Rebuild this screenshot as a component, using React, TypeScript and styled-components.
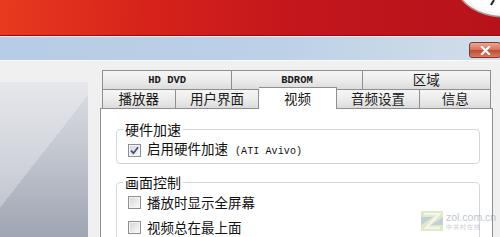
import styled, { createGlobalStyle } from 'styled-components';

const GlobalStyle = createGlobalStyle`
  html, body {
    margin: 0;
    padding: 0;
    background: #f0f0f0;
    overflow: hidden;
  }
  body {
    font-family: "Noto Sans CJK SC", "Noto Sans", sans-serif;
    color: #111;
  }
  #root {
    width: 500px;
    height: 237px;
    overflow: hidden;
  }
`;

const Page = styled.div`
  position: relative;
  width: 500px;
  height: 237px;
  display: flex;
  flex-direction: column;
  overflow: hidden;
`;

const Header = styled.div`
  height: 35px;
  flex: none;
  border-bottom: 1px solid #8a0f13;
  background:
    linear-gradient(100deg, rgba(255, 120, 60, 0.18) 0%, rgba(255, 255, 255, 0) 30%),
    linear-gradient(90deg, #e22d19 0%, #d6221a 30%, #c2161c 60%, #b7121b 100%);
  display: flex;
  justify-content: flex-end;
  align-items: flex-start;
`;

const WhiteLine = styled.div`
  height: 1px;
  flex: none;
  background: #f6eaea;
`;

const TitleBar = styled.div`
  height: 23px;
  flex: none;
  border-bottom: 1px solid #fbfbfb;
  background: linear-gradient(90deg, #b7cde5 0%, #bcd0e6 55%, #d2deea 100%);
  display: flex;
  justify-content: flex-end;
  align-items: flex-start;
`;

const CloseButton = styled.div`
  width: 30px;
  height: 14px;
  margin-top: 5px;
  margin-right: -1px;
  border: 1px solid #8d3426;
  border-radius: 3px;
  background: linear-gradient(#eaa693 0%, #d8735c 48%, #c24a33 52%, #d77a5f 100%);
  display: flex;
  align-items: center;
  justify-content: center;
`;

const Body = styled.div`
  flex: 1;
  min-height: 0;
  display: flex;
  padding-top: 9px;
`;

const LeftPanel = styled.div`
  width: 88px;
  flex: none;
  margin-top: 12px;
  background:
    linear-gradient(128deg, rgba(255, 255, 255, 0.28) 47%, rgba(255, 255, 255, 0) 47%),
    linear-gradient(180deg, #dcdee4 0%, #c3c7d0 45%, #9ea4b1 100%);
`;

const Dialog = styled.div`
  margin-left: 12px;
  width: 393px;
  display: flex;
  flex-direction: column;
`;

const TabRow = styled.div`
  display: flex;
  padding: 0 2px;
  height: 19px;
  flex: none;
  position: relative;
  z-index: 1;
`;

const Tab = styled.div<{ $w: number; $active?: boolean; $mono?: boolean }>`
  width: ${(p) => p.$w}px;
  box-sizing: border-box;
  border: 1px solid #8f8f8f;
  border-bottom: ${(p) => (p.$active ? 'none' : '1px solid #8f8f8f')};
  & + & {
    border-left: none;
  }
  background: ${(p) =>
    p.$active ? '#ffffff' : 'linear-gradient(#f6f6f6 0%, #ececec 50%, #dcdcdc 100%)'};
  margin-top: ${(p) => (p.$active ? '-2px' : '0')};
  height: ${(p) => (p.$active ? '22px' : '20px')};
  display: flex;
  align-items: center;
  justify-content: center;
  font-family: ${(p) =>
    p.$mono ? '"Liberation Mono", monospace' : '"Noto Sans CJK SC", sans-serif'};
  font-size: ${(p) => (p.$mono ? '10.5px' : '13.5px')};
  font-weight: ${(p) => (p.$mono ? 700 : 400)};
  line-height: 1;
  color: #1a1a1a;
`;

const Content = styled.div`
  flex: 1;
  background: #ffffff;
  border: 1px solid #8c8f96;
  border-bottom: none;
  padding: 13px 12px 0 15px;
`;

const Group = styled.fieldset<{ $gap?: number }>`
  margin: ${(p) => p.$gap ?? 0}px 0 0 0;
  padding: 0 0 6px 6px;
  border: 1px solid #d0d8df;
  border-radius: 4px;
  min-width: 0;
`;

const Legend = styled.legend`
  padding: 0 2px;
  font-size: 14px;
  line-height: 14px;
  color: #111;
`;

const Row = styled.div<{ $top: number }>`
  display: flex;
  align-items: center;
  gap: 6px;
  margin-top: ${(p) => p.$top}px;
  padding-left: 5px;
  height: 14px;
  font-size: 13.5px;
  line-height: 14px;
  white-space: nowrap;
`;

const Box = styled.span`
  width: 11px;
  height: 11px;
  flex: none;
  border: 1px solid #8e8f91;
  box-shadow: inset 0 0 0 1px #f4f4f4;
  background: linear-gradient(135deg, #d2d3d6 0%, #ececed 60%, #f8f8f8 100%);
  display: flex;
  align-items: center;
  justify-content: center;
`;

const Mono = styled.span`
  font-family: "Liberation Mono", monospace;
  font-size: 10px;
  margin-left: 7px;
  letter-spacing: 0.1px;
`;

const Watermark = styled.div`
  position: absolute;
  left: 421px;
  top: 211px;
  display: flex;
  align-items: center;
  gap: 3px;
  opacity: 0.55;
`;

const WmText = styled.div`
  display: flex;
  flex-direction: column;
  line-height: 1;
`;

const WmMain = styled.span`
  font-family: "Liberation Sans", sans-serif;
  font-size: 10.5px;
  color: #8a9aa8;
`;

const WmSub = styled.span`
  font-size: 6px;
  color: #9aa4ad;
  margin-top: 1px;
  letter-spacing: 1px;
`;

const Checkbox = ({ checked }: { checked?: boolean }) => (
  <Box>
    {checked && (
      <svg width="9" height="9" viewBox="0 0 9 9">
        <path d="M1 4.6 L3.5 7.2 L8 1.2" fill="none" stroke="#3f4f86" strokeWidth="1.8" />
      </svg>
    )}
  </Box>
);

const App = () => {
  return (
    <Page>
      <GlobalStyle />
      <Header>
        <svg width="42" height="18" viewBox="0 0 42 18">
          <ellipse cx="48" cy="-14" rx="49" ry="31" fill="#f4f4f4" stroke="#9a9a9a" strokeWidth="1.5" />
          <ellipse cx="46" cy="-12" rx="42" ry="25" fill="#ffffff" />
          <path d="M33 5 L36 0" stroke="#222" strokeWidth="2" />
        </svg>
      </Header>
      <WhiteLine />
      <TitleBar>
        <CloseButton>
          <svg width="11" height="9" viewBox="0 0 11 9">
            <path d="M2 1 L9 8 M9 1 L2 8" stroke="#ffffff" strokeWidth="2.2" strokeLinecap="square" />
          </svg>
        </CloseButton>
      </TitleBar>
      <Body>
        <LeftPanel />
        <Dialog>
          <TabRow>
            <Tab $w={131} $mono>HD DVD</Tab>
            <Tab $w={131} $mono>BDROM</Tab>
            <Tab $w={129}>区域</Tab>
          </TabRow>
          <TabRow>
            <Tab $w={74}>播放器</Tab>
            <Tab $w={84}>用户界面</Tab>
            <Tab $w={78} $active>视频</Tab>
            <Tab $w={84}>音频设置</Tab>
            <Tab $w={71}>信息</Tab>
          </TabRow>
          <Content>
            <Group>
              <Legend>硬件加速</Legend>
              <Row $top={7}>
                <Checkbox checked />
                <span>
                  启用硬件加速<Mono>(ATI Avivo)</Mono>
                </span>
              </Row>
            </Group>
            <Group $gap={11}>
              <Legend>画面控制</Legend>
              <Row $top={6}>
                <Checkbox />
                <span>播放时显示全屏幕</span>
              </Row>
              <Row $top={11}>
                <Checkbox />
                <span>视频总在最上面</span>
              </Row>
            </Group>
          </Content>
        </Dialog>
      </Body>
      <Watermark>
        <svg width="22" height="20" viewBox="0 0 22 20">
          <rect x="0" y="0" width="22" height="20" fill="#8fa6c8" />
          <path d="M0 0 H22 V6 L10 14 H22 V20 H0 V14 L12 6 H0 Z" fill="#c9d88a" />
          <path d="M3 3 H18 L5 17 H19" fill="none" stroke="#e8eef4" strokeWidth="2.5" />
        </svg>
        <WmText>
          <WmMain>zol.com.cn</WmMain>
          <WmSub>中关村在线</WmSub>
        </WmText>
      </Watermark>
    </Page>
  );
};

export default App;
